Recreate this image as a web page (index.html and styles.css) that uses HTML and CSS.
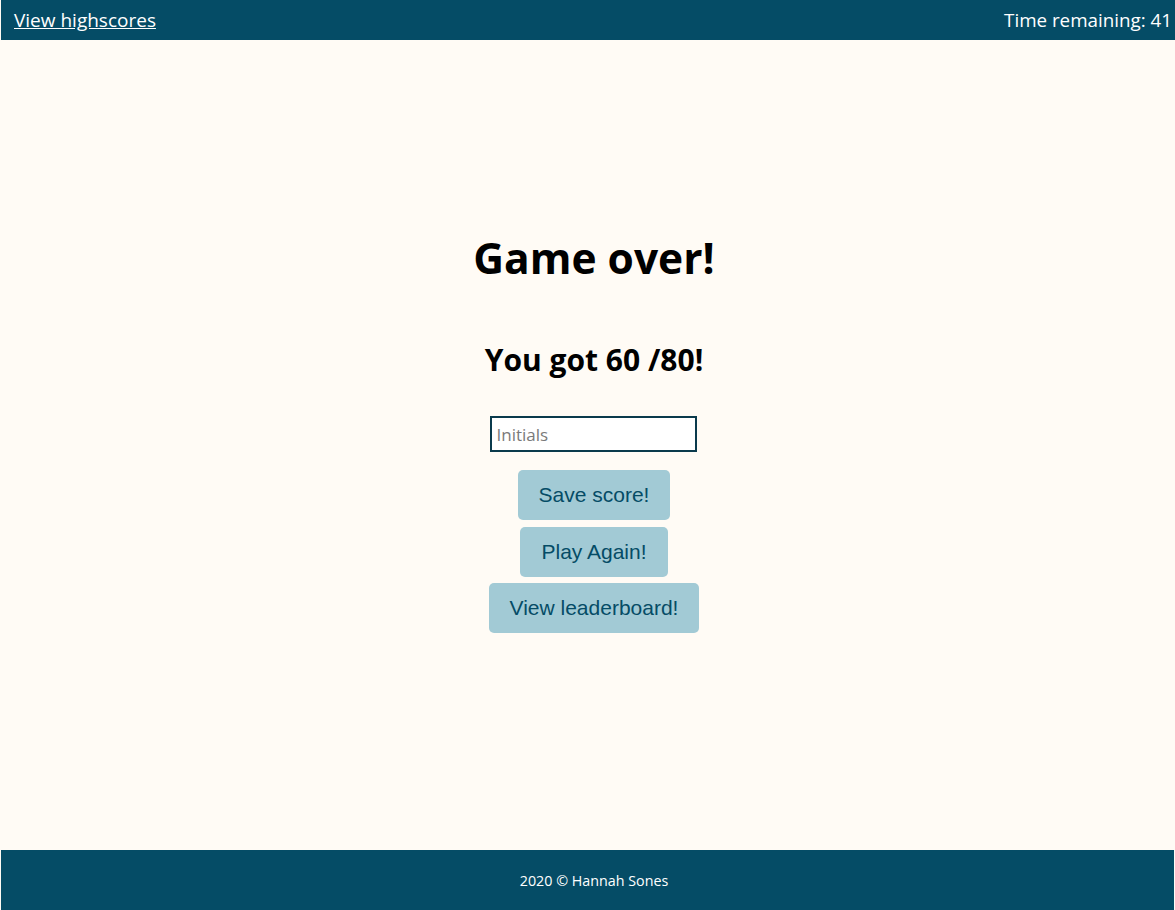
FILE: index.html
```html
<!DOCTYPE html>
<html lang="en">
<head>
<meta charset="utf-8">
<title>Quiz</title>
<link rel="stylesheet" href="styles.css">
</head>
<body>
<header class="topbar">
  <a class="hs-link" href="#">View highscores</a>
  <span class="timer">Time remaining: 41</span>
</header>
<main class="main">
  <section class="result">
    <h1 class="title">Game over!</h1>
    <h2 class="score">You got 60 /80!</h2>
    <input class="initials" type="text" placeholder="Initials">
    <button class="btn">Save score!</button>
    <button class="btn">Play Again!</button>
    <button class="btn">View leaderboard!</button>
  </section>
</main>
<footer class="footer">2020 © Hannah Sones</footer>
</body>
</html>
```

FILE: styles.css
```css
* { box-sizing: border-box; }
html, body { margin: 0; padding: 0; }
body {
  background: #fffbf5;
  font-family: "Open Sans", "Noto Sans", sans-serif;
  min-height: 910px;
  display: flex;
  flex-direction: column;
  color: #000;
}
.topbar {
  height: 40px;
  background: #054c66;
  display: flex;
  align-items: center;
  justify-content: space-between;
  padding: 0 3px 0 13px;
  margin-left: 1px;
}
.hs-link {
  color: #fff;
  font-size: 19px;
  text-decoration: underline;
}
.timer {
  color: #fff;
  font-size: 18.8px;
}
.main {
  flex: 1;
  display: flex;
  justify-content: center;
  padding-left: 13px;
}
.result {
  display: flex;
  flex-direction: column;
  align-items: center;
  padding-top: 188px;
}
.title {
  margin: 0;
  font-size: 42.5px;
  font-weight: 700;
  line-height: 60px;
}
.score {
  margin: 52px 0 0;
  font-size: 30px;
  font-weight: 700;
  line-height: 40px;
}
.initials {
  margin-top: 36px;
  width: 207px;
  height: 36px;
  border: 2px solid #0a3a4c;
  background: #fff;
  font-family: "Open Sans", sans-serif;
  font-size: 17px;
  padding: 0 4px;
  outline: none;
}
.initials::placeholder { color: #7a7a7a; }
.btn {
  margin-top: 7px;
  height: 50px;
  padding: 0 21px;
  border: none;
  border-radius: 5px;
  background: #a2cad5;
  color: #054c66;
  font-family: "Liberation Sans", Arial, sans-serif;
  font-size: 21px;
}
.btn:last-child { margin-top: 6px; }
.initials + .btn { margin-top: 18px; }
.footer {
  height: 60px;
  background: #054c66;
  color: #fff;
  font-size: 14.3px;
  display: flex;
  align-items: center;
  justify-content: center;
  padding-left: 13px;
  margin-left: 1px;
  margin-right: 1px;
}
```
